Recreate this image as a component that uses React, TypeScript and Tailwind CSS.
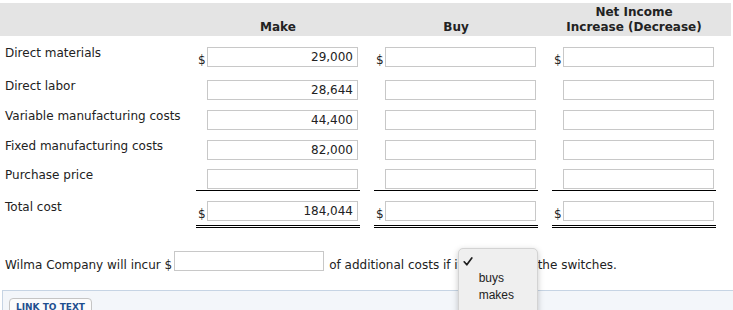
import clsx from "clsx";

type Rule = "none" | "single" | "double";

function Cell({ dollar, value, rule, first }: { dollar: boolean; value?: string; rule: Rule; first?: boolean }) {
  return (
    <div
      className={clsx(
        "flex w-[164px] items-end pr-[2px]",
        !first && "ml-[14px]",
        rule === "single" && "border-b border-black pb-[1px]",
        rule === "double" && "border-b-[3px] border-double border-black pb-[4px]"
      )}
    >
      <span className="w-[11px] pl-[2px] leading-[13px]">{dollar ? "$" : ""}</span>
      <input
        readOnly
        value={value ?? ""}
        className="h-[20px] w-[151px] border border-[#c8c8c8] bg-white pr-[4px] text-right text-[12px] text-[#222] outline-none"
      />
    </div>
  );
}

function Row({
  label,
  make,
  dollar = false,
  rule = "none",
  className,
}: {
  label: string;
  make?: string;
  dollar?: boolean;
  rule?: Rule;
  className?: string;
}) {
  return (
    <div className={clsx("flex items-start", className)}>
      <div className="-mt-[1px] w-[196px] pl-[5px] leading-[15px]">{label}</div>
      <Cell first dollar={dollar} value={make} rule={rule} />
      <Cell dollar={dollar} rule={rule} />
      <Cell dollar={dollar} rule={rule} />
    </div>
  );
}

function Check() {
  return (
    <svg width="10" height="9" viewBox="0 0 10 9" fill="none">
      <path d="M1.2 4.8 L3.8 7.8 L8.8 1" stroke="#1e1e1e" strokeWidth="1.7" strokeLinecap="round" strokeLinejoin="round" />
    </svg>
  );
}

export default function App() {
  return (
    <div className="relative h-[310px] w-[733px] overflow-hidden bg-white font-['DejaVu_Sans',sans-serif] text-[12px] text-[#222]">
      {/* column headings */}
      <div className="mr-[2px] mt-[3px] flex h-[33px] items-end bg-[#e4e4e4] pb-[1px] font-bold leading-[15px]">
        <div className="w-[196px]" />
        <div className="w-[164px] text-center">Make</div>
        <div className="ml-[14px] w-[164px] text-center">Buy</div>
        <div className="ml-[14px] w-[164px] text-center">
          Net Income
          <br />
          Increase (Decrease)
        </div>
      </div>

      <Row className="mt-[11px]" label="Direct materials" make="29,000" dollar />
      <Row className="mt-[13px]" label="Direct labor" make="28,644" />
      <Row className="mt-[10px]" label="Variable manufacturing costs" make="44,400" />
      <Row className="mt-[10px]" label="Fixed manufacturing costs" make="82,000" />
      <Row className="mt-[9px]" label="Purchase price" rule="single" />
      <Row className="mt-[10px]" label="Total cost" make="184,044" dollar rule="double" />

      {/* sentence */}
      <div className="mt-[23px] flex items-end">
        <span className="pl-[5px] leading-[12px]">Wilma Company will incur $</span>
        <input readOnly value="" className="ml-[2px] h-[20px] w-[150px] border border-[#c8c8c8] bg-white outline-none" />
        <span className="ml-[5px] leading-[12px]">of additional costs if i</span>
        <span className="relative flex h-[20px] w-[80px] items-end">
          <span className="leading-[12px]">t</span>
          <div className="absolute left-0 top-[-3px] z-10 h-[70px] w-[80px] rounded-[5px] border border-[#d3d3d3] bg-[#efefef] pt-[4px] font-['Liberation_Sans',sans-serif] text-[12px] leading-[17px] text-[#222] shadow-[0_2px_6px_rgba(0,0,0,0.22)]">
            <div className="flex h-[17px] items-center">
              <span className="w-[20px] pl-[4px]">
                <Check />
              </span>
            </div>
            <div className="flex h-[17px] items-center pl-[20px]">buys</div>
            <div className="flex h-[17px] items-center pl-[20px]">makes</div>
          </div>
        </span>
        <span className="leading-[12px]">the switches.</span>
      </div>

      {/* bottom panel */}
      <div className="ml-[2px] mt-[19px] h-[40px] border-l border-t border-[#c6d4e4] bg-[#f3f6fa] pl-[6px] pt-[6px]">
        <button className="rounded-[4px] border border-[#c5c5c5] bg-[#fbfbfb] px-[6px] pb-[4px] pt-[3px] text-[9px] font-bold leading-[11px] text-[#1f4f8f]">
          LINK TO TEXT
        </button>
      </div>
    </div>
  );
}
